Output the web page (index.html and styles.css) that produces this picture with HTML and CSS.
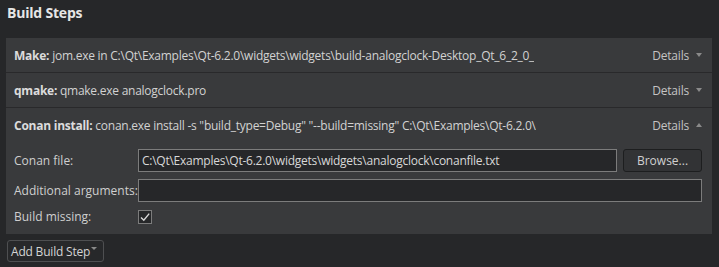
FILE: index.html
```html
<!DOCTYPE html>
<html>
<head>
<meta charset="utf-8">
<link rel="stylesheet" href="styles.css">
</head>
<body>
<div class="page">
  <div class="title">Build Steps</div>
  <div class="steps">
    <div class="step">
      <div class="step-header">
        <div class="summary"><b>Make:</b> jom.exe in C:\Qt\Examples\Qt-6.2.0\widgets\widgets\build-analogclock-Desktop_Qt_6_2_0_</div>
        <div class="details">Details <span class="arrow down"></span></div>
      </div>
    </div>
    <div class="step">
      <div class="step-header">
        <div class="summary"><b>qmake:</b> qmake.exe analogclock.pro</div>
        <div class="details">Details <span class="arrow down"></span></div>
      </div>
    </div>
    <div class="step last">
      <div class="step-header">
        <div class="summary"><b>Conan install:</b> conan.exe install -s "build_type=Debug" "--build=missing" C:\Qt\Examples\Qt-6.2.0\</div>
        <div class="details">Details <span class="arrow up"></span></div>
      </div>
      <div class="form">
        <div class="label">Conan file:</div>
        <div class="field-row">
          <div class="input">C:\Qt\Examples\Qt-6.2.0\widgets\widgets\analogclock\conanfile.txt</div>
          <div class="button">Browse...</div>
        </div>
        <div class="label">Additional arguments:</div>
        <div class="field-row">
          <div class="input"></div>
        </div>
        <div class="label">Build missing:</div>
        <div class="field-row">
          <div class="checkbox"><svg width="12" height="12" viewBox="0 0 12 12"><path d="M2 6.5 L4.8 9.2 L10.2 2.6" fill="none" stroke="#d8d8d8" stroke-width="1.4"/></svg></div>
        </div>
      </div>
    </div>
  </div>
  <div class="add-btn">Add Build Step<span class="arrow small"></span></div>
</div>
</body>
</html>
```
FILE: styles.css
```css
html, body {
  margin: 0;
  padding: 0;
  background: #262729;
}
body {
  font-family: "Open Sans", "Noto Sans", sans-serif;
  font-size: 12px;
  color: #d2d2d2;
}
.page {
  padding: 3px 7px 0 6px;
}
.title {
  font-weight: bold;
  font-size: 14px;
  line-height: 20px;
  color: #e6e6e6;
  padding-left: 1px;
  letter-spacing: -0.2px;
}
.steps {
  margin-top: 15px;
  width: 706px;
  background: #393a3c;
}
.step {
  border-bottom: 1px solid #29292b;
}
.step.last {
  border-bottom: none;
  padding-bottom: 9px;
}
.step-header {
  height: 34px;
  display: flex;
  align-items: center;
  justify-content: space-between;
  padding: 0 10px 0 8px;
}
.summary {
  white-space: nowrap;
  overflow: hidden;
  letter-spacing: -0.25px;
}
.summary b {
  color: #dcdcdc;
}
.details {
  display: flex;
  align-items: center;
  color: #c4c4c4;
  letter-spacing: -0.2px;
}
.arrow {
  display: inline-block;
  width: 0;
  height: 0;
  margin-left: 7px;
  border-left: 3.5px solid transparent;
  border-right: 3.5px solid transparent;
}
.arrow.down {
  border-top: 4px solid #8a8a8a;
}
.arrow.up {
  border-bottom: 4px solid #8a8a8a;
}
.form {
  display: grid;
  grid-template-columns: 124px 1fr;
  row-gap: 7px;
  padding: 7px 10px 0 8px;
  align-items: center;
}
.label {
  color: #cfcfcf;
  line-height: 16px;
}
.field-row {
  display: flex;
  gap: 6px;
  align-items: center;
}
.input {
  flex: 1;
  height: 21px;
  line-height: 21px;
  border: 1px solid #7c7c7c;
  background: #262729;
  padding: 0 3px;
  color: #d8d8d8;
  white-space: nowrap;
  letter-spacing: -0.25px;
}
.button {
  width: 77px;
  height: 21px;
  line-height: 21px;
  border: 1px solid #1d1e1f;
  border-radius: 3px;
  background: #323335;
  text-align: center;
  color: #d0d0d0;
}
.checkbox {
  width: 12px;
  height: 12px;
  border: 1px solid #7c7c7c;
  background: #262729;
  display: flex;
  align-items: center;
  justify-content: center;
}
.add-btn {
  display: inline-flex;
  align-items: center;
  margin-top: 6px;
  margin-left: 1px;
  height: 20px;
  padding: 0 6px 0 3px;
  border: 1px solid #4e4f51;
  border-radius: 3px;
  background: #27282a;
  color: #d4d4d4;
  letter-spacing: -0.2px;
}
.arrow.small {
  margin-left: 1px;
  border-left: 3px solid transparent;
  border-right: 3px solid transparent;
  border-top: 3px solid #8a8a8a;
  position: relative;
  top: -3px;
}
```
